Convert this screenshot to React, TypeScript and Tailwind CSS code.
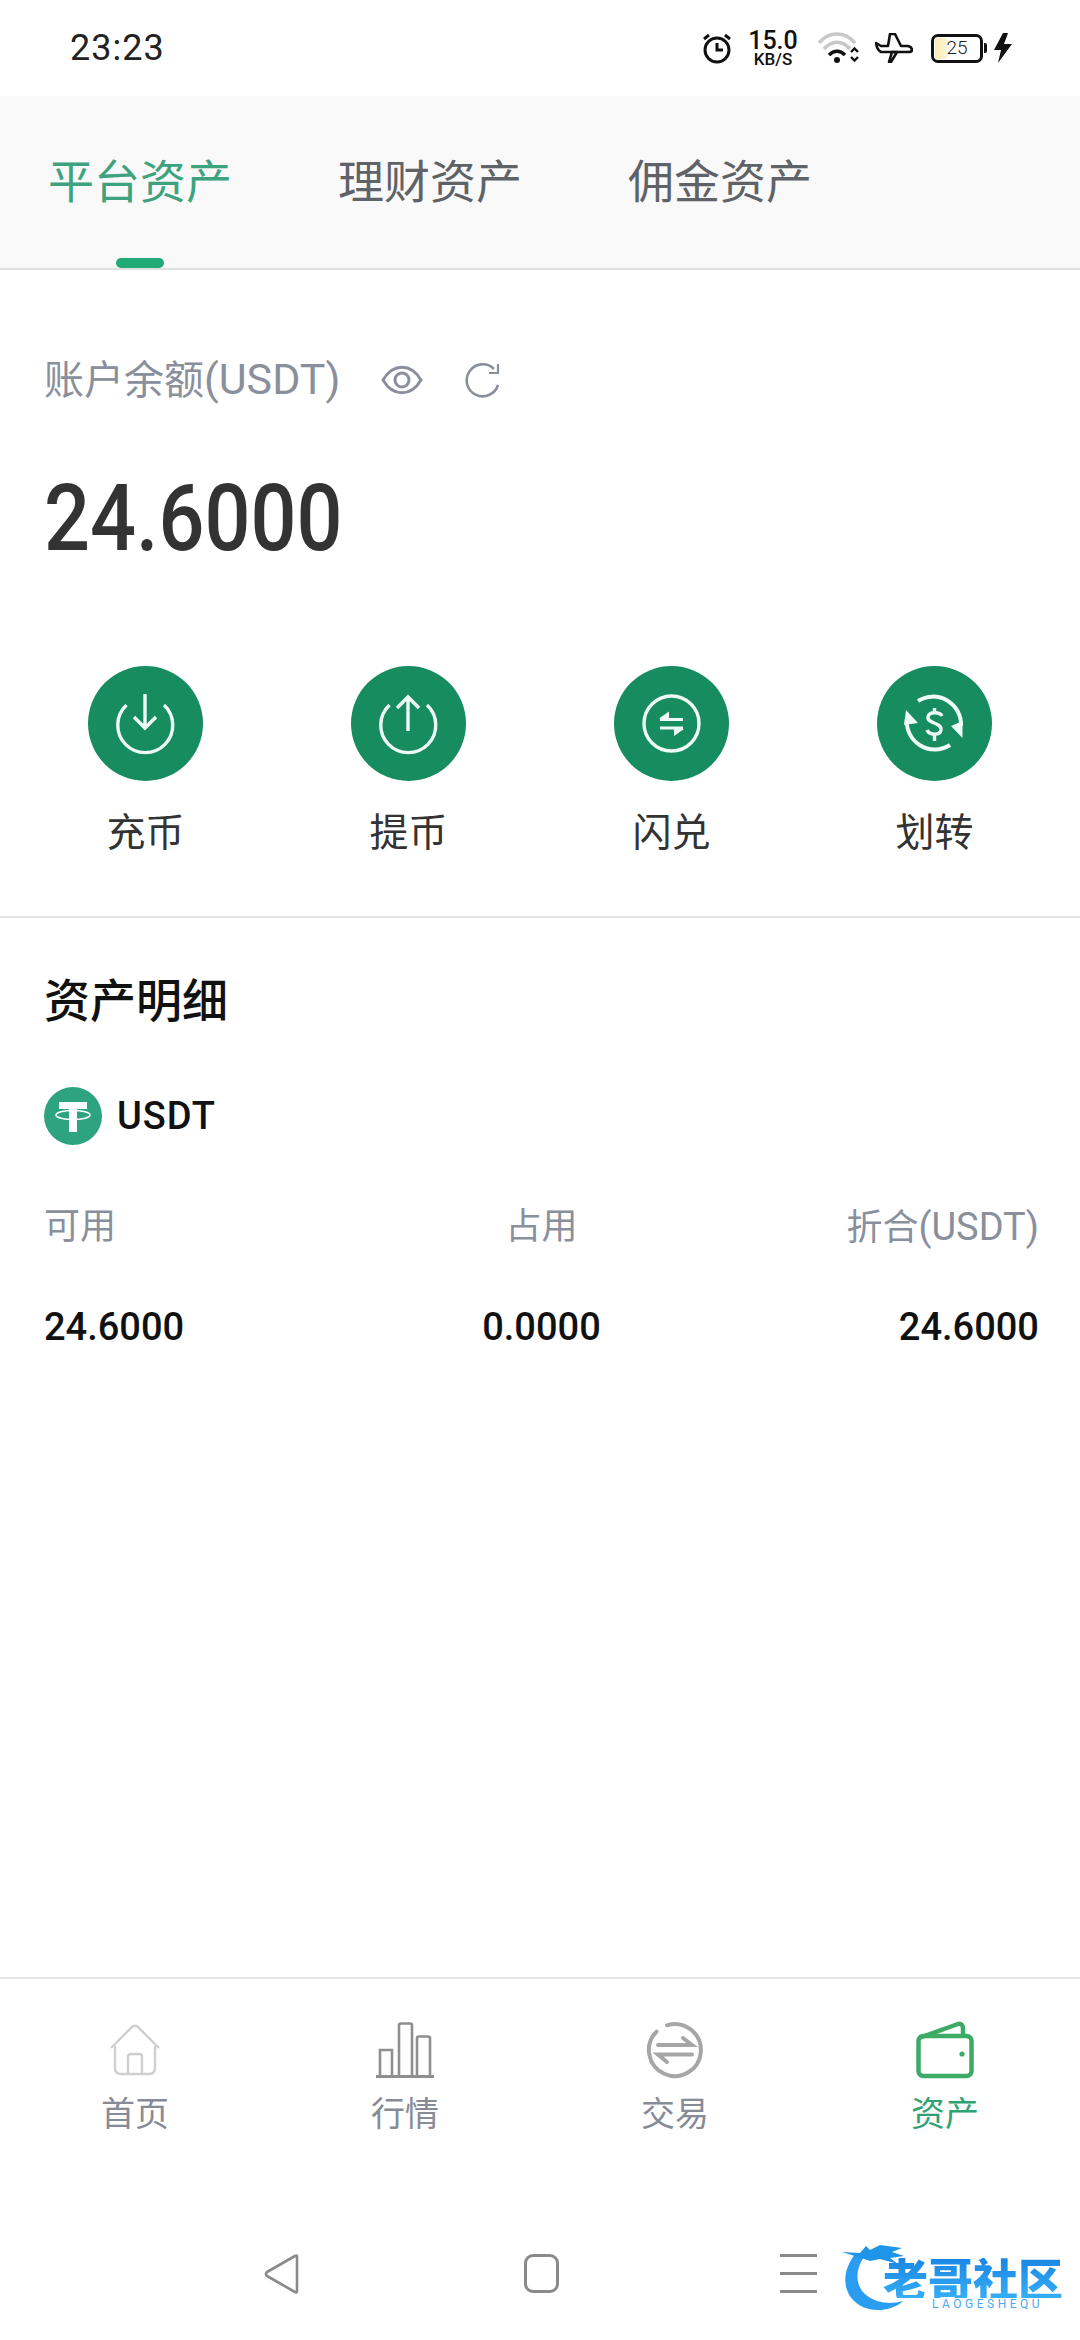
import React from "react";

const ActionCircle = ({ children }: { children: React.ReactNode }) => (
  <div className="w-[115px] h-[115px] rounded-full bg-[#168c5f] flex items-center justify-center">
    <svg width="115" height="115" viewBox="0 0 115 115" fill="none" stroke="#eefaf5" strokeWidth="3.4">
      {children}
    </svg>
  </div>
);

const Tab = ({ label, active }: { label: string; active?: boolean }) => (
  <div className="relative w-[180px] h-full flex items-center justify-center">
    <span className={`text-[46px] leading-[60px] whitespace-nowrap ${active ? "text-[#3da37f]" : "text-[#5f6368]"}`}>{label}</span>
    {active && <div className="absolute bottom-0 left-[66px] w-[48px] h-[10px] rounded-full bg-[#1faa77]" />}
  </div>
);

const actions = [
  {
    label: "充币",
    icon: (
      <>
        <path d="M38.5 39A27.5 27.5 0 1 0 76 39" />
        <path d="M57 28V62M46 51L57 62L68 51" />
      </>
    ),
  },
  {
    label: "提币",
    icon: (
      <>
        <path d="M38.5 39A27.5 27.5 0 1 0 76 39" />
        <path d="M57 31V65M46 42L57 31L68 42" />
      </>
    ),
  },
  {
    label: "闪兑",
    icon: (
      <>
        <circle cx="57.5" cy="57.5" r="27.5" />
        <path d="M46 53.5H69M46 62H69" strokeWidth="3" />
        <path d="M45 52.5L55 45.5V53Z M70 63L60 70V62.5Z" fill="#eefaf5" stroke="none" />
      </>
    ),
  },
  {
    label: "划转",
    icon: (
      <>
        <path d="M41 35A28 28 0 0 1 84 60" strokeWidth="4" />
        <path d="M73 79A28 28 0 0 1 30 52" strokeWidth="4" />
        <path d="M74 60L85.5 55L85.5 72Z M29 44L41 57L27 59Z" fill="#eefaf5" stroke="none" />
        <path d="M65 50C63 46 52 45 51 51C50 58 65 56 64 64C63 70 52 69 50 64" strokeWidth="3.4" />
        <path d="M57.5 42V48M57.5 69V75" strokeWidth="3.4" />
      </>
    ),
  },
];

const navItems = [
  {
    label: "首页",
    color: "text-[#868b96]",
    icon: (
      <svg width="58" height="58" viewBox="0 0 58 58" fill="none" stroke="#cfcfcf" strokeWidth="2.4">
        <path d="M5 27L26 6Q29 3.5 32 6L53 27" />
        <path d="M9 25V47Q9 53 15 53H43Q49 53 49 47V25" />
        <path d="M22 53V36Q22 33 25 33H33Q36 33 36 36V53" />
      </svg>
    ),
  },
  {
    label: "行情",
    color: "text-[#868b96]",
    icon: (
      <svg width="58" height="58" viewBox="0 0 58 58" fill="none" stroke="#8f8f8f" strokeWidth="2.6">
        <path d="M4 55V29H16V55" />
        <path d="M23 55V4Q23 2.5 25 2.5H34Q36 2.5 36 4V55" />
        <path d="M41 55V17Q41 15.5 43 15.5H52Q54 15.5 54 17V55" />
        <path d="M0 55.5H58" strokeWidth="3" />
      </svg>
    ),
  },
  {
    label: "交易",
    color: "text-[#868b96]",
    icon: (
      <svg width="58" height="58" viewBox="0 0 58 58" fill="none" stroke="#a6a6a6" strokeWidth="4" strokeLinecap="round">
        <path d="M10.6 10.6A26 26 0 1 0 21 4.3" />
        <path d="M12 24H46L37 17" />
        <path d="M46 33.5H12L21 41" />
      </svg>
    ),
  },
  {
    label: "资产",
    color: "text-[#2fa272]",
    icon: (
      <svg width="58" height="58" viewBox="0 0 58 58" fill="none" stroke="#3dab66" strokeWidth="4.5" strokeLinejoin="round">
        <rect x="2.5" y="15" width="53" height="40" rx="5" />
        <path d="M3 17L42 3Q47 2 47 8V15" />
        <circle cx="46" cy="33" r="2.6" fill="#3dab66" stroke="none" />
      </svg>
    ),
  },
];

export default function App() {
  return (
    <div className="w-[1080px] h-[2340px] bg-white flex flex-col overflow-hidden relative font-['Roboto','Noto_Sans_CJK_SC',sans-serif]">
      {/* status bar */}
      <div className="h-[96px] shrink-0 flex items-center pl-[70px] pr-[67px] justify-between">
        <span className="text-[36px] leading-[40px] text-[#222] tracking-[1px]">23:23</span>
        <div className="flex items-center">
          <svg width="32" height="32" viewBox="0 0 32 32" fill="none" stroke="#111" strokeWidth="3">
            <circle cx="16" cy="18" r="12" />
            <path d="M16 11V18H22M3 7L8 3M29 7L24 3" />
          </svg>
          <div className="ml-[15px] w-[50px] flex flex-col items-center text-[#111]">
            <span className="text-[25px] leading-[22px] font-medium">15.0</span>
            <span className="text-[17px] leading-[15px] font-medium">KB/S</span>
          </div>
          <svg className="ml-[20px]" width="42" height="32" viewBox="0 0 42 32" fill="none" strokeWidth="3.5">
            <path d="M1 11C11 -1 27 -1 37 11" stroke="#c8c8c8" />
            <path d="M6 17C14 8 24 8 32 17" stroke="#c8c8c8" />
            <path d="M11 23C16 18 22 18 27 23" stroke="#111" />
            <circle cx="19" cy="28" r="3" fill="#111" />
            <path d="M33 20L36.5 16.5L40 20M33 25L36.5 28.5L40 25" stroke="#111" strokeWidth="2.4" />
          </svg>
          <svg className="ml-[15px]" width="38" height="30" viewBox="0 0 38 30" fill="none" stroke="#111" strokeWidth="2.6" strokeLinejoin="round">
            <path d="M1 10L6 13L13 13L15 1H20L26 13H33Q37 14 37 17Q37 19 33 19H6Q2 17 1 10Z" />
            <path d="M14 29L17 19H22L16 29Z" />
          </svg>
          <div className="ml-[18px] relative w-[52px] h-[29px] rounded-[7px] border-[3px] border-[#111] flex items-center justify-center bg-white">
            <div className="absolute left-[1px] top-[1px] bottom-[1px] w-[13px] rounded-[3px] bg-gradient-to-r from-[#f9eab0] to-[#fdf6dc]" />
            <span className="relative text-[19px] leading-[20px] font-light text-[#222]">25</span>
          </div>
          <div className="ml-[1px] w-[3px] h-[10px] bg-[#111] rounded-r-[2px]" />
          <svg className="ml-[6px]" width="20" height="30" viewBox="0 0 20 30" fill="#111">
            <path d="M10 0L1 17H8L5 30L19 11H11L15 0Z" />
          </svg>
        </div>
      </div>

      {/* tabs */}
      <div className="h-[174px] shrink-0 bg-[#f9f9f9] border-b-2 border-[#e0e0e0] flex pl-[50px] gap-[110px]">
        <Tab label="平台资产" active />
        <Tab label="理财资产" />
        <Tab label="佣金资产" />
      </div>

      {/* balance */}
      <div className="flex items-center pl-[44px] mt-[85px] h-[50px]">
        <span className="text-[40px] leading-[50px] text-[#8a8f9c]">账户余额<span className="text-[43px]">(USDT)</span></span>
        <svg className="ml-[41px]" width="42" height="32" viewBox="0 0 42 32" fill="none" stroke="#8a8f9c" strokeWidth="3">
          <path d="M2 16C12 -1 30 -1 40 16C30 33 12 33 2 16Z" />
          <circle cx="21" cy="16" r="7" />
        </svg>
        <svg className="ml-[42px]" width="36" height="38" viewBox="0 0 36 38" fill="none" stroke="#8a8f9c" strokeWidth="2.6">
          <path d="M29 8A16 16 0 1 0 33 24" />
          <path d="M33 3V12H24" strokeWidth="2.2" />
        </svg>
      </div>
      <div className="pl-[44px] mt-[69px] h-[90px] flex items-center">
        <span className="inline-block origin-left scale-x-[0.87] text-[93px] leading-[90px] font-medium text-[#333]">24.6000</span>
      </div>

      {/* actions */}
      <div className="grid grid-cols-4 px-[14px] mt-[102px] pb-[57px] border-b-2 border-[#e5e5e5]">
        {actions.map((a) => (
          <div key={a.label} className="flex flex-col items-center">
            <ActionCircle>{a.icon}</ActionCircle>
            <span className="mt-[26px] text-[39px] leading-[52px] text-[#333]">{a.label}</span>
          </div>
        ))}
      </div>

      {/* details */}
      <div className="flex-1 pl-[44px] pr-[41px]">
        <div className="mt-[53px] text-[46px] leading-[60px] font-medium text-[#111]">资产明细</div>
        <div className="mt-[56px] flex items-center">
          <svg width="58" height="58" viewBox="0 0 58 58">
            <circle cx="29" cy="29" r="29" fill="#2ea37f" />
            <path d="M15 15H43V22H33V45H25V22H15Z" fill="#fff" />
            <ellipse cx="29" cy="28" rx="17" ry="4.5" fill="none" stroke="#fff" strokeWidth="1.6" />
          </svg>
          <span className="ml-[15px] text-[38px] leading-[50px] font-medium text-[#111] tracking-[1px]">USDT</span>
        </div>
        <div className="mt-[58px] grid grid-cols-3 text-[36px] leading-[48px] text-[#8a8f9c]">
          <span>可用</span>
          <span className="text-center">占用</span>
          <span className="text-right">折合<span className="text-[38px]">(USDT)</span></span>
        </div>
        <div className="mt-[51px] grid grid-cols-3 text-[38px] leading-[48px] font-medium text-[#111]">
          <span>24.6000</span>
          <span className="text-center">0.0000</span>
          <span className="text-right">24.6000</span>
        </div>
      </div>

      {/* bottom tabs */}
      <div className="shrink-0 h-[200px] border-t-2 border-[#e5e5e5] grid grid-cols-4 pt-[42px]">
        {navItems.map((n) => (
          <div key={n.label} className="flex flex-col items-center">
            <div className="w-[58px] h-[58px]">{n.icon}</div>
            <span className={`mt-[13px] text-[34px] leading-[44px] ${n.color}`}>{n.label}</span>
          </div>
        ))}
      </div>

      {/* system nav */}
      <div className="shrink-0 h-[163px] relative flex pt-[77px] pl-[264px]">
        <svg width="36" height="40" viewBox="0 0 36 40" fill="none" stroke="#8a8a8a" strokeWidth="2.6" strokeLinejoin="round">
          <path d="M33 2V37Q33 39 31 38L3 22Q1 20 3 18L31 2Q33 1 33 2Z" />
        </svg>
        <div className="ml-[224px] w-[35px] h-[39px] rounded-[9px] border-[3px] border-[#8a8a8a]" />
        <div className="ml-[221px] w-[37px] h-[39px] flex flex-col justify-between">
          <div className="h-[3px] bg-[#8a8a8a]" />
          <div className="h-[3px] bg-[#8a8a8a]" />
          <div className="h-[3px] bg-[#8a8a8a]" />
        </div>
      </div>

      {/* watermark logo */}
      <div className="absolute left-[840px] top-[2243px] w-[226px] h-[72px]">
        <svg className="absolute left-0 top-0" width="90" height="72" viewBox="0 0 90 72" fill="none">
          <path d="M16 10C6 22 3 36 7 47C12 61 26 68 41 67C50 66 58 63 63 58C50 62 36 60 26 52C16 44 14 28 24 14Z" fill="#2a9df0" />
          <path d="M2 9L20 10L26 3L30 7L40 2L62 5L52 9L64 13L50 15L58 21L40 16L30 18L18 14Z" fill="#1f95ea" />
        </svg>
        <span className="absolute left-[43px] top-[15px] text-[45px] leading-[40px] font-black whitespace-nowrap bg-gradient-to-b from-[#1a86e4] to-[#36aef5] bg-clip-text text-transparent font-['Noto_Sans_CJK_SC',sans-serif]">老哥社区</span>
        <span className="absolute left-[92px] top-[55px] text-[12px] leading-[13px] tracking-[3.5px] whitespace-nowrap text-[#4aa8ee]">LAOGESHEQU</span>
      </div>
    </div>
  );
}
